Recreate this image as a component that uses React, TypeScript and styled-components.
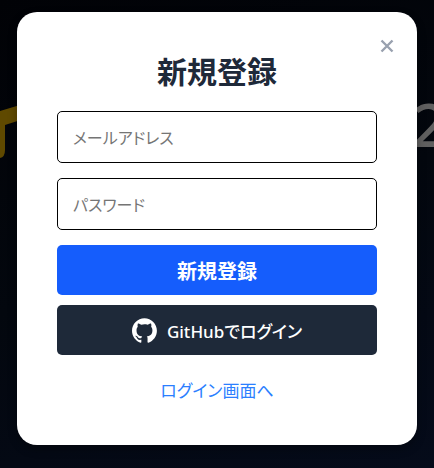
import React from "react";
import styled, { createGlobalStyle } from "styled-components";

const GlobalStyle = createGlobalStyle`
  *, *::before, *::after { box-sizing: border-box; }
  body {
    margin: 0;
    background: #02040a;
    font-family: "Noto Sans", "Noto Sans CJK JP", sans-serif;
  }
  button, input { font: inherit; }
`;

const Page = styled.main`
  position: relative;
  display: flex;
  justify-content: center;
  align-items: flex-start;
  min-height: 100vh;
  padding: 12px 17px 23px;
  overflow: hidden;
  background: linear-gradient(160deg, #010206 0%, #03070e 50%, #050b1a 100%);
`;

const Logo = styled.svg`
  position: absolute;
  top: 100px;
  left: 0;
  width: 60px;
  height: 64px;
`;

const Year = styled.span`
  position: absolute;
  top: 88px;
  left: calc(50% + 195px);
  color: #606060;
  font-size: 60px;
  font-weight: 500;
  line-height: 72px;
`;

const Dialog = styled.section`
  position: relative;
  width: 100%;
  max-width: 400px;
  padding: 40px;
  border-radius: 20px;
  background: #ffffff;
  box-shadow: 0 4px 10px rgba(0, 0, 0, 0.3);
`;

const CloseButton = styled.button`
  position: absolute;
  top: 20px;
  right: 20px;
  display: grid;
  place-items: center;
  width: 20px;
  height: 28px;
  padding: 0;
  border: 0;
  background: none;
  color: #99a1af;
  cursor: pointer;
`;

const Title = styled.h1`
  margin: 0 0 23px;
  color: #1e2939;
  font-family: "Noto Sans CJK JP", sans-serif;
  font-size: 30px;
  font-weight: 700;
  line-height: 36px;
  text-align: center;
`;

const Form = styled.form`
  display: flex;
  flex-direction: column;
`;

const Field = styled.input`
  width: 100%;
  height: 52px;
  margin-bottom: 15px;
  padding: 0 15px;
  border: 1px solid #000000;
  border-radius: 5px;
  background: #ffffff;
  color: #000000;
  font-family: "Noto Sans CJK JP", sans-serif;
  font-size: 16px;
  font-feature-settings: "palt";
  &::placeholder { color: #757575; opacity: 1; }
`;

const ActionButton = styled.button<{ $variant: "primary" | "github" }>`
  display: flex;
  align-items: center;
  justify-content: center;
  gap: 10px;
  height: 50px;
  margin-bottom: 10px;
  padding: 0 10px;
  border: 0;
  border-radius: 5px;
  background: ${({ $variant }) => ($variant === "primary" ? "#155dfc" : "#1e2939")};
  color: #ffffff;
  font-size: ${({ $variant }) => ($variant === "primary" ? "20px" : "17px")};
  font-weight: ${({ $variant }) => ($variant === "primary" ? 700 : 500)};
  font-feature-settings: "palt";
  cursor: pointer;
`;

const LoginLink = styled.a`
  align-self: center;
  margin-top: 10px;
  color: #2b7fff;
  font-family: "Noto Sans CJK JP", sans-serif;
  font-size: 17px;
  font-feature-settings: "palt";
  line-height: 30px;
  text-decoration: none;
`;

function GitHubMark() {
  return (
    <svg width="25" height="25" viewBox="0 0 98 96" fill="currentColor" aria-hidden="true">
      <path
        fillRule="evenodd"
        clipRule="evenodd"
        d="M48.854 0C21.839 0 0 22 0 49.217c0 21.756 13.993 40.172 33.405 46.69 2.427.49 3.316-1.059 3.316-2.362 0-1.141-.08-5.052-.08-9.127-13.59 2.934-16.42-5.867-16.42-5.867-2.184-5.704-5.42-7.17-5.42-7.17-4.448-3.015.324-3.015.324-3.015 4.934.326 7.523 5.052 7.523 5.052 4.367 7.496 11.404 5.378 14.235 4.074.404-3.178 1.699-5.378 3.074-6.6-10.839-1.141-22.243-5.378-22.243-24.283 0-5.378 1.94-9.778 5.014-13.2-.485-1.222-2.184-6.275.486-13.038 0 0 4.125-1.304 13.426 5.052a46.97 46.97 0 0 1 12.214-1.63c4.125 0 8.33.571 12.213 1.63 9.302-6.356 13.427-5.052 13.427-5.052 2.67 6.763.97 11.816.485 13.038 3.155 3.422 5.015 7.822 5.015 13.2 0 18.905-11.404 23.06-22.324 24.283 1.78 1.548 3.316 4.481 3.316 9.126 0 6.6-.08 11.897-.08 13.526 0 1.304.89 2.853 3.316 2.364 19.412-6.52 33.405-24.935 33.405-46.691C97.707 22 75.788 0 48.854 0z"
      />
    </svg>
  );
}

export default function App() {
  return (
    <>
      <GlobalStyle />
      <Page>
        <Logo viewBox="0 0 60 64" aria-hidden="true">
          <path d="M0 11 L30 2 V17 L5 25 V50 Q5 57 0 58 Z" fill="#5f4900" />
        </Logo>
        <Year aria-hidden="true">2</Year>
        <Dialog role="dialog" aria-labelledby="signup-title">
          <CloseButton type="button" aria-label="閉じる">
            <svg width="14" height="14" viewBox="0 0 14 14" fill="none" stroke="currentColor" strokeWidth="2.4" aria-hidden="true">
              <path d="M1.5 1.5 L12.5 12.5 M12.5 1.5 L1.5 12.5" />
            </svg>
          </CloseButton>
          <Title id="signup-title">新規登録</Title>
          <Form onSubmit={(event) => event.preventDefault()}>
            <Field type="email" placeholder="メールアドレス" aria-label="メールアドレス" />
            <Field type="password" placeholder="パスワード" aria-label="パスワード" />
            <ActionButton type="submit" $variant="primary">新規登録</ActionButton>
            <ActionButton type="button" $variant="github">
              <GitHubMark />
              <span>GitHubでログイン</span>
            </ActionButton>
            <LoginLink href="#login">ログイン画面へ</LoginLink>
          </Form>
        </Dialog>
      </Page>
    </>
  );
}
